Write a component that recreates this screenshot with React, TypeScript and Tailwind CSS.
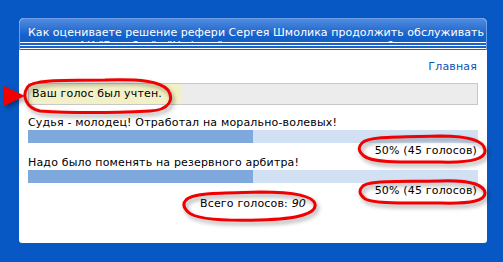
import React from "react";

const options = [
  { text: "Судья - молодец! Отработал на морально-волевых!", pct: 50, votes: 45 },
  { text: "Надо было поменять на резервного арбитра!", pct: 50, votes: 45 },
];

function Marks() {
  // red marker annotations drawn over the screenshot
  return (
    <svg
      className="absolute inset-0 pointer-events-none"
      width="503"
      height="262"
      viewBox="0 0 503 262"
      style={{ filter: "drop-shadow(2px 3px 2px rgba(0,0,0,0.35))" }}
    >
      <polygon points="4,86 4,106 25,96" fill="#f00000" />
      <g fill="none" stroke="#f00000" strokeWidth="3" strokeLinejoin="round" strokeLinecap="round">
        <path d="M27,88 C30,80 60,80 105,80 C140,79 160,81 168,90 C174,99 170,110 150,111 C110,113 70,113 40,111 C26,108 22,96 27,88 Z" />
        <path d="M362,143 C368,136 400,137 440,136 C470,136 484,141 485,150 C486,158 474,163 440,162 C405,162 372,163 364,156 C358,151 358,147 362,143 Z" />
        <path d="M362,187 C366,180 400,182 440,181 C470,180 484,185 485,193 C485,200 474,204 440,203 C405,203 370,204 364,198 C359,194 359,190 362,187 Z" />
        <path d="M186,200 C192,192 230,193 260,192 C295,192 313,196 315,204 C317,213 300,219 260,220 C225,221 195,219 188,212 C183,207 183,203 186,200 Z" />
      </g>
    </svg>
  );
}

export default function App() {
  const total = options.reduce((s, o) => s + o.votes, 0);

  return (
    <div className="relative w-[503px] h-[262px] overflow-hidden bg-[#0758c4] pt-[18px] pl-[19px] font-['DejaVu_Sans',Verdana,sans-serif] text-[11px] text-black">
      <div className="w-[468px] h-[225px] bg-white rounded-t-[5px] rounded-b-[3px] flex flex-col">
        {/* header */}
        <div className="relative h-[32px] overflow-hidden rounded-t-[5px] bg-gradient-to-b from-[#4f8be0] via-[#1763cb] to-[#0a59c5] border border-[#6d9ee6] border-b-0 pl-[8px] pt-[7px] text-white leading-[13px] tracking-[0.04px] whitespace-nowrap">
          <div>Как оцениваете решение рефери Сергея Шмолика продолжить обслуживать</div>
          <div>встречу ФК "Витебск" - "Нафтан", несмотря на травму спины?</div>
          <div className="absolute left-0 right-0 bottom-0 flex flex-col">
            <div className="h-[1px] bg-white" />
            <div className="h-[2px] bg-[#1a62c8]" />
            <div className="h-[1px] bg-white" />
            <div className="h-[2px] bg-[#1a62c8]" />
            <div className="h-[1px] bg-white" />
            <div className="h-[1px] bg-[#1a62c8]" />
          </div>
        </div>

        {/* body */}
        <div className="px-[9px] flex flex-col tracking-[0.17px]">
          <div className="mt-[10px] text-right text-[#0b52b0] leading-[13px] pr-[1px]">Главная</div>
          <div className="mt-[10px] h-[22px] border border-[#c8c8c8] bg-[#ececec] flex items-center">
            <span className="bg-[#f2f0c6] h-full flex items-center pl-[3px] pr-[20px]">Ваш голос был учтен.</span>
          </div>

          {options.map((o, i) => (
            <div key={o.text} className={i === 0 ? "flex flex-col mt-[11px]" : "flex flex-col -mt-[1px]"}>
              <div className="leading-[13px] mb-[1px]">{o.text}</div>
              <div className="h-[13px] bg-[#d2e0f3] flex">
                <div className="h-full bg-[#7fa9dc]" style={{ width: `${o.pct}%` }} />
              </div>
              <div className="mt-[1px] text-right leading-[13px] pr-[1px]">
                {o.pct}% ({o.votes} голосов)
              </div>
            </div>
          ))}

          <div className="text-center leading-[13px]">
            Всего голосов: <i>{total}</i>
          </div>
        </div>
      </div>
      <Marks />
    </div>
  );
}
